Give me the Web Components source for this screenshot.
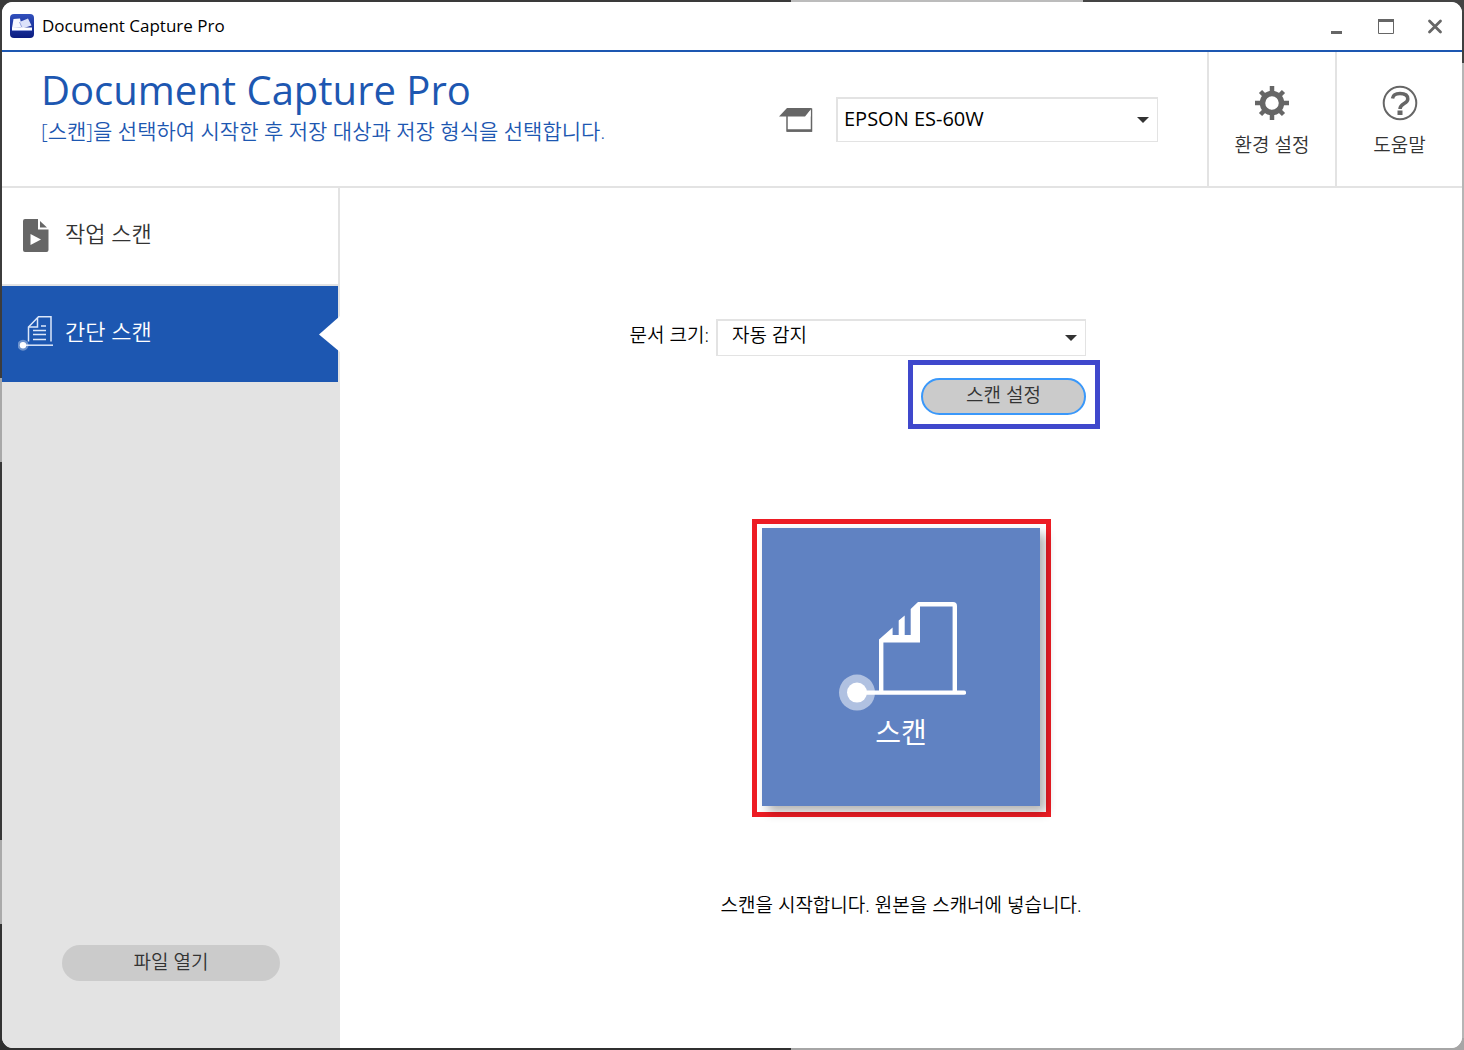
<!DOCTYPE html>
<html lang="ko">
<head>
<meta charset="utf-8">
<title>Document Capture Pro</title>
<style>
  html, body { margin: 0; min-height: 100%; }
  body {
    --blue: #1d57b1;
    --line: #e3e3e3;
    --ink: #333;
    font-family: "Open Sans", "Noto Sans CJK KR", sans-serif;
    font-size: 19px;
    line-height: 24px;
    color: #000;
  }
</style>
</head>
<body>
<capture-app></capture-app>
<script>
const define = (name, html, setup) => {
  const template = document.createElement('template');
  template.innerHTML = '<style>*{box-sizing:border-box}button,select{font:inherit;color:inherit;margin:0;border:0;padding:0;background:none}svg{display:block;flex:none}</style>' + html;
  customElements.define(name, class extends HTMLElement {
    constructor() {
      super();
      this.attachShadow({ mode: 'open' }).append(template.content.cloneNode(true));
    }
    connectedCallback() { if (setup) setup(this, this.shadowRoot); }
  });
};

define('title-bar', `
  <style>
    :host { display: flex; align-items: center; gap: 8px; height: 50px; padding: 0 15px 0 8px; border-bottom: 2px solid var(--blue); background: #fff; box-sizing: border-box; }
    h2 { margin: 0; flex: 1; font-size: 17px; font-weight: 400; }
    .controls { display: flex; gap: 25px; }
    button { width: 24px; height: 24px; }
  </style>
  <svg width="24" height="24" viewBox="0 0 24 24">
    <defs><linearGradient id="g" x2="0" y2="1"><stop stop-color="#3150bd"/><stop offset="1" stop-color="#0b1c80"/></linearGradient></defs>
    <rect width="24" height="24" rx="4" fill="url(#g)"/>
    <path d="M3.500 5 10 4.500 12 13.500 2 14Z" fill="#f7f8ff"/>
    <path d="M9.500 8 18 4.500 21.500 11.500 14 14 11 14Z" fill="#dce2fa"/>
    <path d="M9.500 8 12 13.500" stroke="#8795d8" stroke-width=".8"/>
    <path d="M2 13.500H22V16H2Z" fill="#fff"/>
    <path d="M2 16.500H22" stroke="#8c9ad8"/>
  </svg>
  <h2>Document Capture Pro</h2>
  <div class="controls">
    <button aria-label="최소화"><svg width="24" height="24"><path d="M6 17h11v3H6z" fill="#666"/></svg></button>
    <button aria-label="최대화"><svg width="24" height="24"><path d="M4 5h16v3H4z" fill="#666"/><path d="M4.500 6v13.500h15V6" fill="none" stroke="#666"/></svg></button>
    <button aria-label="닫기"><svg width="24" height="24"><path d="M6.500 7 17.500 18M17.500 7 6.500 18" stroke="#666" stroke-width="2.800" stroke-linecap="round"/></svg></button>
  </div>`);

define('drop-down', `
  <style>
    :host { display: grid; align-items: center; }
    select { grid-area: 1 / 1; appearance: none; width: 100%; height: 100%; border: 2px solid var(--line); border-right-width: 1px; border-bottom-width: 1px; background: #fff; padding: 0 32px var(--lift, 3px) var(--inset, 6px); color: #000; }
    svg { grid-area: 1 / 1; justify-self: end; margin-right: 9px; pointer-events: none; }
  </style>
  <select><option></option></select>
  <svg width="12" height="6"><path d="M0 0h12L6 6z" fill="#333"/></svg>`,
  (host, root) => {
    root.querySelector('option').textContent = host.getAttribute('value');
    root.querySelector('select').setAttribute('aria-label', host.getAttribute('label'));
  });

define('tool-button', `
  <style>
    :host { display: flex; width: 128px; border-left: 2px solid var(--line); box-sizing: border-box; }
    :host(:last-of-type) { width: 127px; }
    button { flex: 1; display: flex; flex-direction: column; align-items: center; gap: 12px; padding-top: 33px; color: var(--ink); font-weight: 350; }
  </style>
  <button><slot name="icon"></slot><slot></slot></button>`);

define('app-header', `
  <style>
    :host { display: flex; height: 136px; border-bottom: 2px solid var(--line); background: #fff; box-sizing: border-box; }
    .intro { flex: 1; padding: 13px 0 0 39px; color: var(--blue); }
    h1 { margin: 0; font-size: 40px; line-height: 50px; font-weight: 400; }
    p { margin: 2px 0 0; font-size: 21px; line-height: 28px; font-weight: 350; }
    .device { display: flex; gap: 23px; padding: 45px 49px 0 0; }
    .device svg { margin-top: 10px; }
    .device drop-down { width: 322px; height: 45px; font-size: 20px; }
  </style>
  <div class="intro">
    <h1>Document Capture Pro</h1>
    <p>[스캔]을 선택하여 시작한 후 저장 대상과 저장 형식을 선택합니다.</p>
  </div>
  <div class="device">
    <svg width="34" height="26"><path d="M8 9V24H32.500V1.500" fill="none" stroke="#666" stroke-width="1.500"/><path d="M8 23.500H33" stroke="#666" stroke-width="2.500"/><path d="M8 1H33L26 9.500H0Z" fill="#666"/><path d="M31.700 3V9.500L27 9.500Z" fill="#fff"/></svg>
    <drop-down label="스캐너" value="EPSON ES-60W"></drop-down>
  </div>
  <tool-button>
    <svg slot="icon" width="36" height="36" viewBox="-18 -18 36 36"><g fill="none" stroke="#666"><circle r="9.500" stroke-width="5.500"/><path d="M0-17V-10M0 17V10M-17 0H-10M17 0H10" stroke-width="4.500"/><path d="M-11.500-11.500-8-8M11.500 11.500 8 8M-11.500 11.500-8 8M11.500-11.500 8-8" stroke-width="4.500"/></g></svg>
    환경 설정
  </tool-button>
  <tool-button>
    <svg slot="icon" width="36" height="36" viewBox="-18 -18 36 36"><circle r="16.300" fill="none" stroke="#666" stroke-width="2"/><path d="M-7.500-4.500C-7-8.500-3.500-9.500 0-9.500C4-9.500 7.800-8 7.800-4C7.800 1 0 0 0 6" fill="none" stroke="#666" stroke-width="3.500"/><path d="M-2.500 7.500H2.500V12H-2.500Z" fill="#666"/></svg>
    도움말
  </tool-button>`);

define('nav-item', `
  <style>
    :host { display: block; height: 96px; background: #fff; color: var(--ink); font-size: 22px; font-weight: 350; }
    :host([selected]) { background: var(--blue); color: #fff; }
    button { display: grid; grid-template-columns: auto 1fr auto; column-gap: 11px; align-items: center; width: 100%; height: 100%; padding: 0 0 0 16px; text-align: left; }
    .label { padding-bottom: 6px; }
    .pointer { display: none; }
    :host([selected]) .pointer { display: block; margin-right: -2px; }
  </style>
  <button><slot name="icon"></slot><span class="label"><slot></slot></span>
    <svg class="pointer" width="21" height="36"><path d="M21 0V36L0 18.500Z" fill="#fff"/></svg>
  </button>`);

define('pill-button', `
  <style>
    :host { display: block; height: 36px; }
    button { width: 100%; height: 100%; border-radius: 18px; background: #cbcbcb; color: var(--ink); padding-bottom: 3px; font-weight: 350; }
    :host([focused]) button { border: 2px solid #3a98fa; border-radius: 19px; }
  </style>
  <button><slot></slot></button>`);

define('side-nav', `
  <style>
    :host { display: flex; flex-direction: column; width: 338px; flex: none; border-right: 2px solid var(--line); background: var(--line); box-sizing: border-box; }
    nav { display: flex; flex-direction: column; gap: 2px; flex: 1; }
    pill-button { margin: 0 58px 67px 60px; }
  </style>
  <nav>
    <nav-item>
      <svg slot="icon" width="36" height="36"><path d="M7 1H20V11.500H30.500V32Q30.500 34 28.500 34H7Q5 34 5 32V3Q5 1 7 1Z" fill="#666"/><path d="M22 3V9.500H29Z" fill="#666"/><path d="M12.500 16V27L23 21.500Z" fill="#fff"/></svg>
      작업 스캔
    </nav-item>
    <nav-item selected>
      <svg slot="icon" width="36" height="36" viewBox="0 0 36 36"><g fill="none" stroke="#dce7fa" stroke-width="1.500"><path d="M10.500 25.500V11L20.500 .8H33V25.500"/><path d="M10.500 11H19.500V2"/><path d="M15 14.500H28M15 18.500H28M15 23.500H28M23 10H28"/><path d="M5 29.200H35"/></g><circle cx="5" cy="29.200" r="5.500" fill="#fff" opacity=".35"/><circle cx="5" cy="29.200" r="3.200" fill="#fff"/></svg>
      간단 스캔
    </nav-item>
  </nav>
  <pill-button>파일 열기</pill-button>`);

define('mark-frame', `
  <style>:host { display: block; border: 5px solid var(--mark); box-sizing: border-box; }</style>
  <slot></slot>`);

define('scan-tile', `
  <style>
    :host { display: block; }
    button { display: flex; flex-direction: column; align-items: center; width: 278px; height: 278px; padding-top: 72px; background: #6082c2; color: #fff; font-size: 28px; line-height: 40px; box-shadow: 6px 6px 10px rgba(0,0,0,.3); }
  </style>
  <button>
    <svg width="130" height="112"><g fill="none" stroke="#fff" stroke-width="4.400"><path d="M45.200 93V41M83 4.200H117Q118.800 4.200 118.800 6V93"/><path d="M21 92.600H128" stroke-linecap="round"/></g>
      <path d="M43 42V39.500L56.600 27.500V35H62.700V20.500L68.700 15.500V35H74.700V9L82 2H84V42.500H43Z" fill="#fff"/>
      <circle cx="21" cy="92.600" r="18" fill="#fff" opacity=".5"/><circle cx="21" cy="92.600" r="10" fill="#fff"/></svg>
    <slot></slot>
  </button>`);

define('scan-panel', `
  <style>
    :host { display: flex; flex-direction: column; align-items: center; flex: 1; padding-top: 131px; background: #fff; }
    .size { display: grid; grid-template-columns: 1fr 370px 1fr; width: 100%; row-gap: 4px; font-weight: 350; }
    .size > span { justify-self: end; padding: 4px 7px 0 0; }
    drop-down { height: 37px; --inset: 14px; --lift: 6px; }
    .settings { --mark: #3f48cc; grid-column: 2; justify-self: end; width: 192px; height: 69px; margin-right: -14px; padding: 13px 9px 9px 8px; }
    .settings pill-button { height: 37px; }
    .scan { --mark: #ed1c24; margin: 90px 0 0 1px; padding: 4px 6px 6px 5px; }
    p { margin: 76px 0 0; font-weight: 350; }
  </style>
  <div class="size">
    <span>문서 크기:</span>
    <drop-down label="문서 크기" value="자동 감지"></drop-down>
    <mark-frame class="settings"><pill-button focused>스캔 설정</pill-button></mark-frame>
  </div>
  <mark-frame class="scan"><scan-tile>스캔</scan-tile></mark-frame>
  <p>스캔을 시작합니다. 원본을 스캐너에 넣습니다.</p>`);

define('capture-app', `
  <style>
    :host { display: flex; min-height: 100vh; padding: 2px; box-sizing: border-box;
      background:
        linear-gradient(90deg, #3a3a3a 54%, #bcbcbc 54% 74%, #444 74%) top / 100% 12px no-repeat,
        linear-gradient(90deg, #303030 54%, #a6a6a6 54%) bottom / 100% 12px no-repeat,
        linear-gradient(#404040 6%, #b5b5b5 6%) right / 12px 100% no-repeat,
        linear-gradient(#3c3c3c 36%, #a8a8a8 36% 44%, #383838 44% 80%, #aaa 80% 88%, #333 88%) left / 12px 100% no-repeat; }
    .window { flex: 1; display: flex; flex-direction: column; border-radius: 11px; overflow: hidden; background: #fff; }
    .body { flex: 1; display: flex; }
  </style>
  <div class="window">
    <title-bar></title-bar>
    <app-header></app-header>
    <div class="body"><side-nav></side-nav><scan-panel></scan-panel></div>
  </div>`);
</script>
</body>
</html>
